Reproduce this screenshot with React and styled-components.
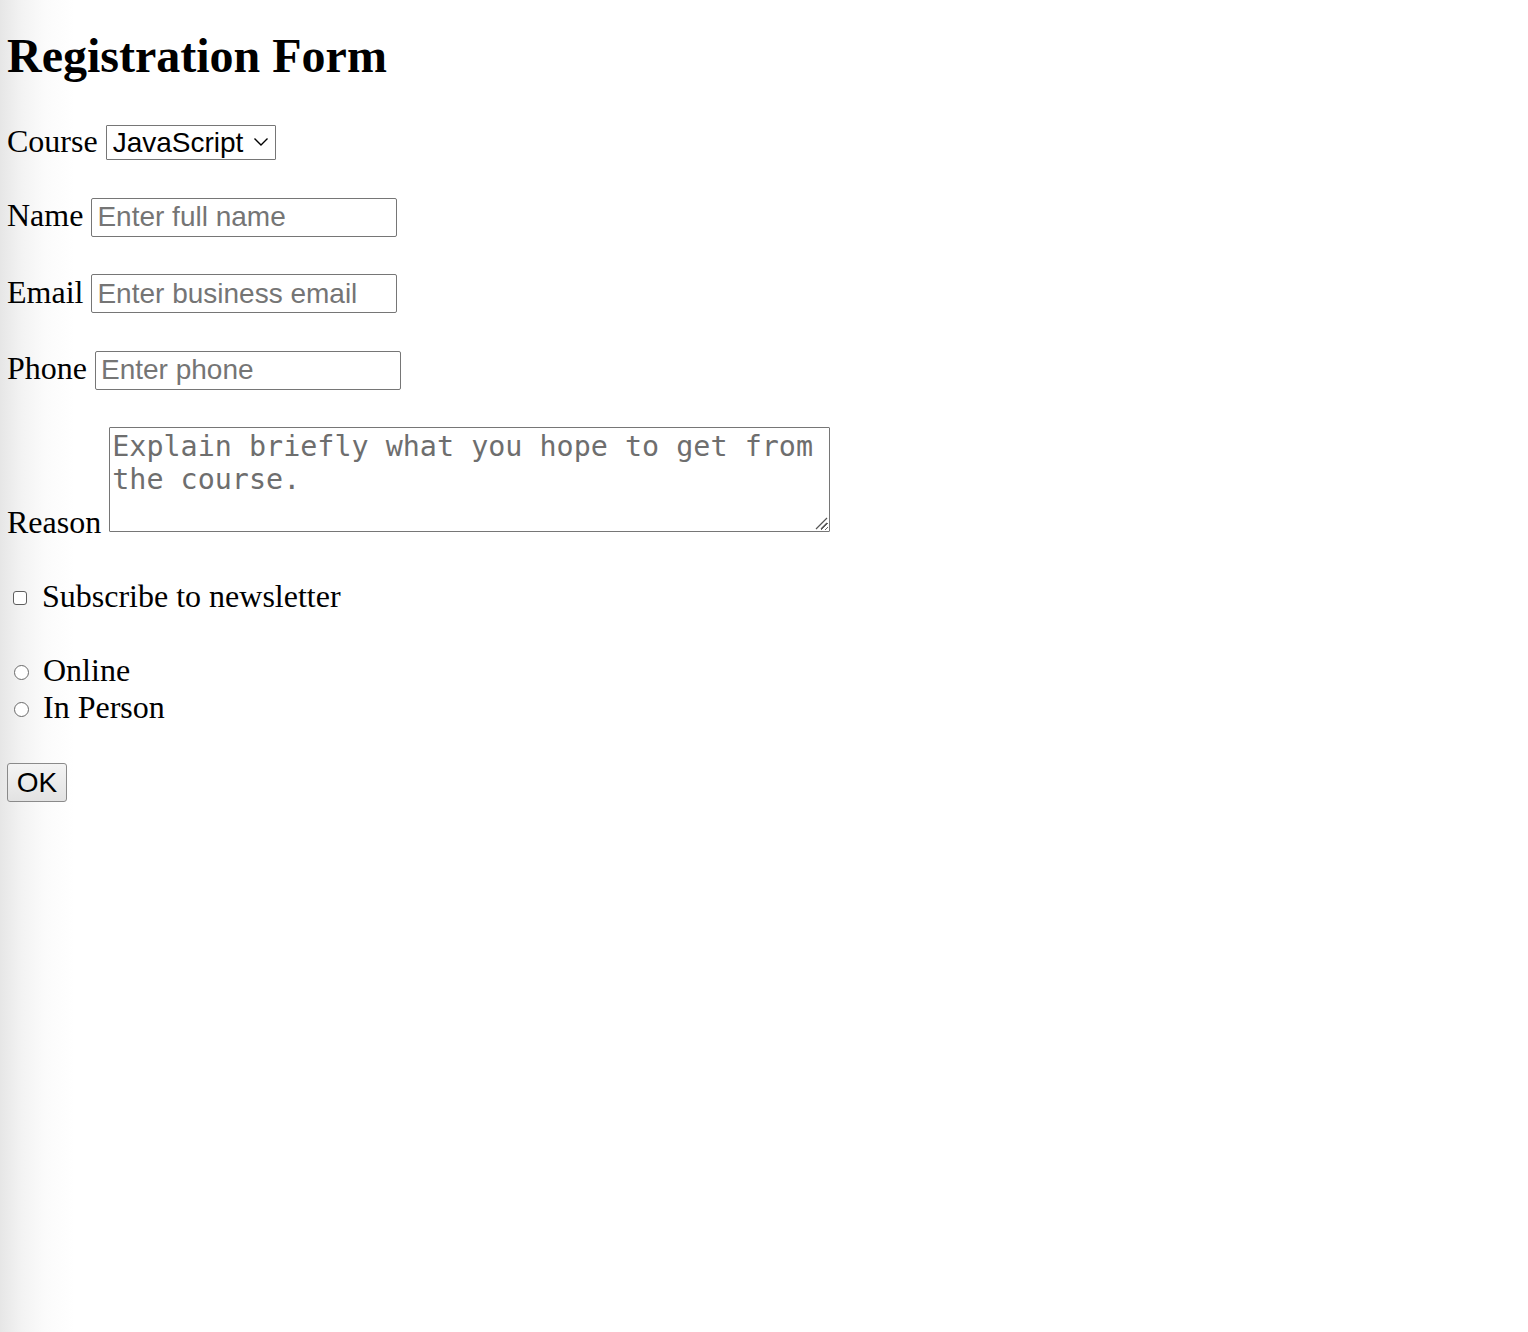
import React from "react";
import styled, { createGlobalStyle } from "styled-components";

const GlobalStyle = createGlobalStyle`
  html, body {
    margin: 0;
    min-height: 100%;
  }

  body {
    min-height: 1332px;
    background: linear-gradient(to right, #e6e6e6 0, #f3f3f3 22px, #fbfbfb 45px, #fff 75px);
    font-family: "Liberation Serif", "Times New Roman", serif;
    color: #000;
  }
`;

const Page = styled.section`
  padding: 28px 7px 0;
`;

const Title = styled.h1`
  margin: 0 0 40px;
  font-size: 48px;
  font-weight: bold;
  line-height: normal;
`;

const Form = styled.form`
  display: flex;
  flex-direction: column;
  align-items: flex-start;
  gap: 37px;
`;

const Row = styled.div`
  display: flex;
  align-items: ${(p) => p.$align || "baseline"};
  gap: ${(p) => p.$gap || "8px"};
`;

const Label = styled.label`
  font-size: 32px;
  line-height: normal;
`;

const SelectWrap = styled.span`
  position: relative;
  display: inline-flex;
`;

const Select = styled.select`
  appearance: none;
  width: 170px;
  height: 35px;
  padding: 0 30px 0 6px;
  border: 1px solid #767676;
  border-radius: 1px;
  background: #fff;
  color: #000;
  font-family: "Liberation Sans", Arial, sans-serif;
  font-size: 28px;
  line-height: normal;
`;

const Chevron = styled.svg`
  position: absolute;
  right: 7px;
  top: 12px;
  width: 16px;
  height: 10px;
  pointer-events: none;
`;

const TextInput = styled.input`
  box-sizing: border-box;
  width: 306px;
  height: 39px;
  padding: 0 5px;
  border: 1px solid #767676;
  border-radius: 2px;
  font-family: "Liberation Sans", Arial, sans-serif;
  font-size: 28px;
  color: #000;
  background: #fff;

  &::placeholder {
    color: #757575;
  }
`;

const AreaWrap = styled.span`
  position: relative;
  display: inline-flex;
  margin-bottom: 9.5px;
`;

const TextArea = styled.textarea`
  box-sizing: border-box;
  width: 721px;
  height: 105px;
  margin: 0;
  padding: 2px 2px;
  border: 1px solid #767676;
  border-radius: 1px;
  font-family: "DejaVu Sans Mono", "Liberation Mono", monospace;
  font-size: 28.4px;
  line-height: normal;
  color: #000;

  &::placeholder {
    color: #6e6e6e;
  }
`;

const Grip = styled.svg`
  position: absolute;
  right: 2px;
  bottom: 2px;
  width: 14px;
  height: 14px;
  pointer-events: none;
`;

const Check = styled.input`
  appearance: none;
  box-sizing: border-box;
  width: 14px;
  height: 14px;
  margin: 13px 0 0 6px;
  border: 1px solid #5f5f5f;
  border-radius: 3px;
  background: #fff;
`;

const Radio = styled(Check)`
  width: 15px;
  height: 15px;
  margin: 13px 0 0 7px;
  border-radius: 50%;
  border-color: #6a6a6a;
`;

const RadioGroup = styled.div`
  display: flex;
  flex-direction: column;
`;

const Button = styled.button`
  box-sizing: border-box;
  width: 60px;
  height: 39px;
  padding: 0;
  border: 1px solid #8a8a8a;
  border-radius: 3px;
  background: linear-gradient(#f4f4f4, #e2e2e2);
  color: #000;
  font-family: "Liberation Sans", Arial, sans-serif;
  font-size: 28px;
`;

export default function App() {
  return (
    <>
      <GlobalStyle />
      <Page>
        <Title>Registration Form</Title>
        <Form onSubmit={(e) => e.preventDefault()}>
          <Row>
            <Label htmlFor="course">Course</Label>
            <SelectWrap>
              <Select id="course" defaultValue="js">
                <option value="js">JavaScript</option>
                <option value="py">Python</option>
              </Select>
              <Chevron viewBox="0 0 16 10">
                <path d="M1.5 1.5 L8 8 L14.5 1.5" fill="none" stroke="#000" strokeWidth="1.4" />
              </Chevron>
            </SelectWrap>
          </Row>

          <Row>
            <Label htmlFor="name">Name</Label>
            <TextInput id="name" placeholder="Enter full name" />
          </Row>

          <Row>
            <Label htmlFor="email">Email</Label>
            <TextInput id="email" type="email" placeholder="Enter business email" />
          </Row>

          <Row>
            <Label htmlFor="phone">Phone</Label>
            <TextInput id="phone" type="tel" placeholder="Enter phone" />
          </Row>

          <Row $align="flex-end">
            <Label htmlFor="reason">Reason</Label>
            <AreaWrap>
              <TextArea id="reason" placeholder="Explain briefly what you hope to get from the course." />
              <Grip viewBox="0 0 14 14">
                <path d="M13 2 L2 13 M13 7 L7 13" stroke="#555" strokeWidth="1.2" fill="none" />
              </Grip>
            </AreaWrap>
          </Row>

          <Row $align="flex-start" $gap="15px">
            <Check type="checkbox" id="news" />
            <Label htmlFor="news">Subscribe to newsletter</Label>
          </Row>

          <RadioGroup>
            <Row $align="flex-start" $gap="14px">
              <Radio type="radio" name="mode" id="online" />
              <Label htmlFor="online">Online</Label>
            </Row>
            <Row $align="flex-start" $gap="14px">
              <Radio type="radio" name="mode" id="inperson" />
              <Label htmlFor="inperson">In Person</Label>
            </Row>
          </RadioGroup>

          <Button type="submit">OK</Button>
        </Form>
      </Page>
    </>
  );
}
